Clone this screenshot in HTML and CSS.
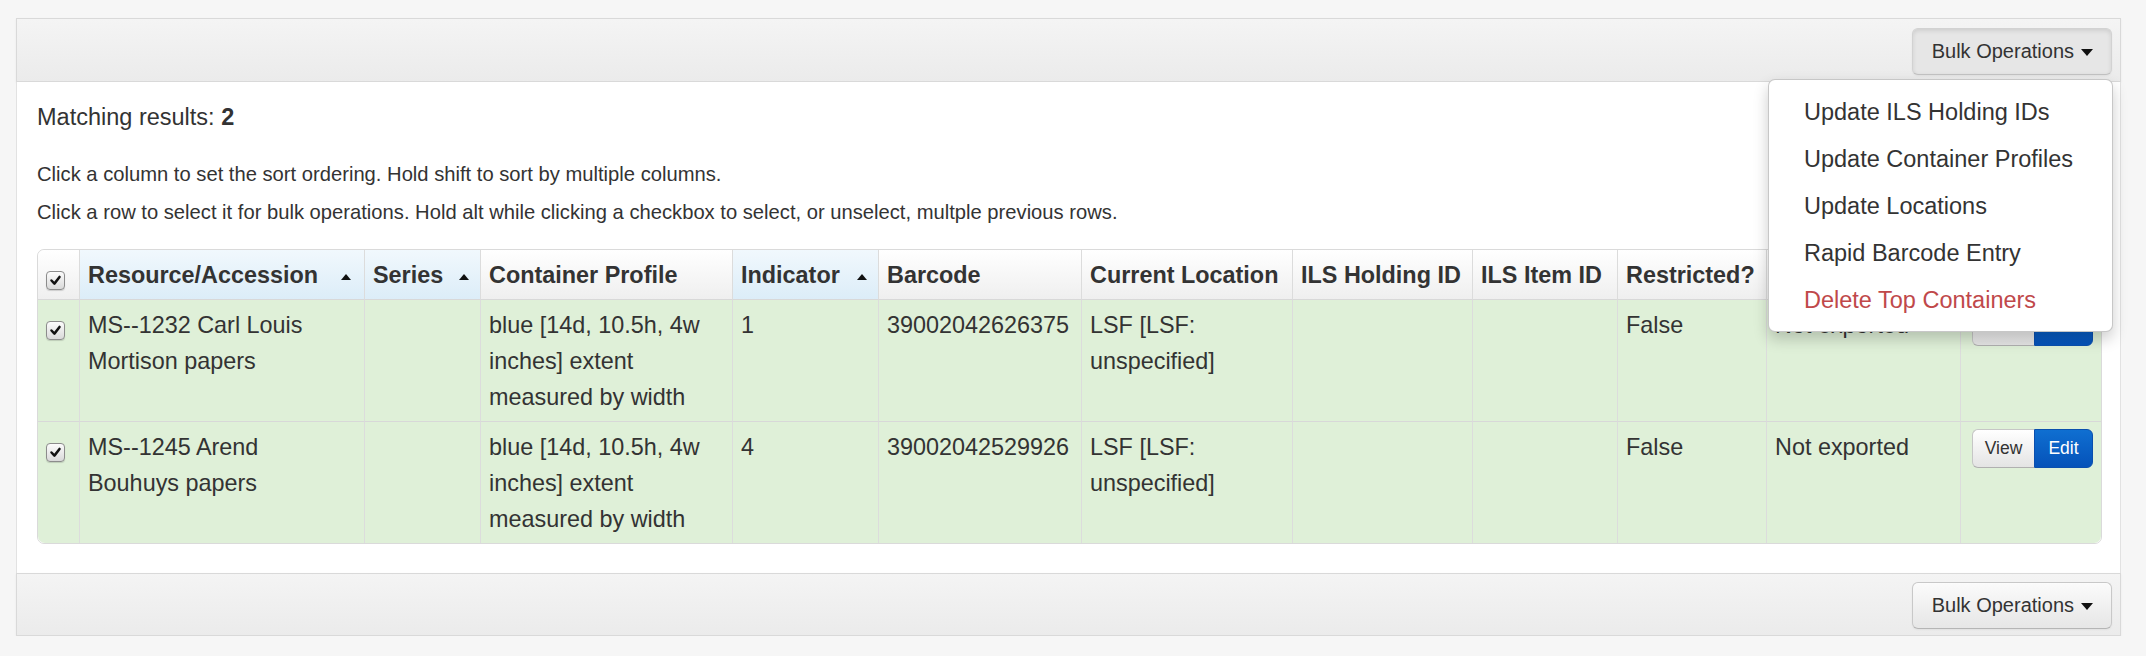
FILE: index.html
```html
<!DOCTYPE html>
<html>
<head>
<meta charset="utf-8">
<title>Top Containers</title>
<link rel="stylesheet" href="styles.css">
</head>
<body>
<div class="page">
  <div class="toolbar toolbar-top">
    <div class="btn-group">
      <button class="btn btn-bulk pressed">Bulk Operations <span class="caret"></span></button>
      <ul class="dropdown-menu">
        <li>Update ILS Holding IDs</li>
        <li>Update Container Profiles</li>
        <li>Update Locations</li>
        <li>Rapid Barcode Entry</li>
        <li class="danger">Delete Top Containers</li>
      </ul>
    </div>
  </div>

  <div class="panel-body">
    <div class="matching">Matching results: <strong>2</strong></div>
    <p class="help first">Click a column to set the sort ordering. Hold shift to sort by multiple columns.</p>
    <p class="help">Click a row to select it for bulk operations. Hold alt while clicking a checkbox to select, or unselect, multple previous rows.</p>

    <table class="results">
      <thead>
        <tr>
          <th class="c-check"><span class="checkbox"><svg viewBox="0 0 19 19"><path d="M5 9.5 L8.3 13 L14 5.5"/></svg></span></th>
          <th class="c-res sorted"><div class="th-in"><span>Resource/Accession</span><i class="sort-up"></i></div></th>
          <th class="c-series sorted"><div class="th-in"><span>Series</span><i class="sort-up"></i></div></th>
          <th class="c-prof">Container Profile</th>
          <th class="c-ind sorted"><div class="th-in"><span>Indicator</span><i class="sort-up"></i></div></th>
          <th class="c-bar">Barcode</th>
          <th class="c-loc">Current Location</th>
          <th class="c-hold">ILS Holding ID</th>
          <th class="c-item">ILS Item ID</th>
          <th class="c-restr">Restricted?</th>
          <th class="c-exp">Exported to ILS?</th>
          <th class="c-act"></th>
        </tr>
      </thead>
      <tbody>
        <tr>
          <td class="c-check"><span class="checkbox"><svg viewBox="0 0 19 19"><path d="M5 9.5 L8.3 13 L14 5.5"/></svg></span></td>
          <td class="c-res">MS--1232 Carl Louis Mortison papers</td>
          <td></td>
          <td>blue [14d, 10.5h, 4w inches] extent measured by width</td>
          <td>1</td>
          <td>39002042626375</td>
          <td>LSF [LSF: unspecified]</td>
          <td></td>
          <td></td>
          <td>False</td>
          <td>Not exported</td>
          <td class="c-act"><div class="btn-pair"><span class="btn-sm btn-view">View</span><span class="btn-sm btn-edit">Edit</span></div></td>
        </tr>
        <tr>
          <td class="c-check"><span class="checkbox"><svg viewBox="0 0 19 19"><path d="M5 9.5 L8.3 13 L14 5.5"/></svg></span></td>
          <td class="c-res">MS--1245 Arend Bouhuys papers</td>
          <td></td>
          <td>blue [14d, 10.5h, 4w inches] extent measured by width</td>
          <td>4</td>
          <td>39002042529926</td>
          <td>LSF [LSF: unspecified]</td>
          <td></td>
          <td></td>
          <td>False</td>
          <td>Not exported</td>
          <td class="c-act"><div class="btn-pair"><span class="btn-sm btn-view">View</span><span class="btn-sm btn-edit">Edit</span></div></td>
        </tr>
      </tbody>
    </table>
  </div>

  <div class="toolbar toolbar-bottom">
    <div class="btn-group">
      <button class="btn btn-bulk">Bulk Operations <span class="caret"></span></button>
    </div>
  </div>
</div>
</body>
</html>
```

FILE: styles.css
```css
* { box-sizing: border-box; }

html, body {
  margin: 0;
  background: #f6f6f6;
}

body {
  padding: 18px 25px 0 16px;
  font-family: "Liberation Sans", Arial, Helvetica, sans-serif;
  color: #333;
}

.page {
  width: 2105px;
}

/* toolbars */
.toolbar {
  display: flex;
  justify-content: flex-end;
  background: linear-gradient(#f4f4f4, #ebebeb);
  border: 1px solid #d9d9d9;
  padding: 9px 8px 6px 0;
  box-shadow: 0 1px 2px rgba(0,0,0,0.06);
}

.toolbar-bottom {
  padding: 8px 8px 6px 0;
}

.btn-group {
  position: relative;
}

.btn {
  font-family: "Liberation Sans", Arial, Helvetica, sans-serif;
  font-size: 20px;
  color: #333;
  height: 47px;
  padding: 0 18px 0 19px;
  border: 1px solid #c8c8c8;
  border-bottom-color: #b5b5b5;
  border-radius: 6px;
  background: linear-gradient(#fbfbfb, #e6e6e6);
  box-shadow: inset 0 1px 0 rgba(255,255,255,0.3), 0 1px 2px rgba(0,0,0,0.05);
  display: flex;
  align-items: center;
  gap: 7px;
}

.btn.pressed {
  background: #e6e6e6;
  border-color: #d2d2d2;
  border-bottom-color: #c2c2c2;
  box-shadow: inset 0 2px 4px rgba(0,0,0,0.1), 0 1px 2px rgba(0,0,0,0.05);
}

.caret {
  display: inline-block;
  width: 0;
  height: 0;
  border-top: 7px solid #111;
  border-left: 6px solid transparent;
  border-right: 6px solid transparent;
  margin-top: 1px;
}

/* dropdown */
.dropdown-menu {
  position: absolute;
  top: 51px;
  right: -1px;
  width: 345px;
  margin: 0;
  padding: 9px 0 7px;
  list-style: none;
  background: #fff;
  border: 1px solid rgba(0,0,0,0.22);
  border-radius: 7px;
  box-shadow: 0 7px 15px rgba(0,0,0,0.2);
  z-index: 10;
}

.dropdown-menu li {
  font-size: 23.5px;
  line-height: 47px;
  padding: 0 20px 0 35px;
  white-space: nowrap;
  color: #333;
}

.dropdown-menu li.danger {
  color: #c0484a;
}

/* panel */
.panel-body {
  background: #fff;
  border-left: 1px solid #e2e2e2;
  border-right: 1px solid #e2e2e2;
  padding: 20px 20px 29px 20px;
}

.matching {
  font-size: 23.5px;
  line-height: 30px;
}

.help {
  font-size: 20.2px;
  line-height: 28px;
  margin: 10px 0 0;
}

.help.first {
  margin-top: 28px;
}

/* table */
.results {
  margin-top: 23px;
  width: 2064px;
  table-layout: fixed;
  border-collapse: separate;
  border-spacing: 0;
  border: 1px solid #dadada;
  border-radius: 7px;
  font-size: 23.4px;
  line-height: 36px;
}

.results th,
.results td {
  padding: 7px 8px 6px 8px;
  text-align: left;
  vertical-align: top;
  border-left: 1px solid #dcdcdc;
}

.results th:first-child,
.results td:first-child {
  border-left: none;
}

.results td {
  border-top: 1px solid #d8d8d8;
  background: #dff0d8;
}

.results th {
  font-weight: bold;
  white-space: nowrap;
  background: linear-gradient(#ffffff, #efefef);
}

.results th.sorted {
  background: linear-gradient(#f1f8fd, #dcedf8);
}

.results th:first-child { border-top-left-radius: 7px; }
.results th:last-child { border-top-right-radius: 7px; }
.results tbody tr:last-child td:first-child { border-bottom-left-radius: 7px; }
.results tbody tr:last-child td:last-child { border-bottom-right-radius: 7px; }

.results .c-check { width: 41px; padding: 7px 0 6px 8px; }
.results .c-res { width: 285px; padding-right: 10px; }
.results .c-series { width: 116px; }
.results .c-prof { width: 252px; }
.results .c-ind { width: 146px; }
.results .c-bar { width: 203px; }
.results .c-loc { width: 211px; }
.results .c-hold { width: 180px; }
.results .c-item { width: 145px; }
.results .c-restr { width: 149px; }
.results .c-exp { width: 194px; }
.results .c-act { width: 141px; padding-right: 8px; }

.th-in {
  display: flex;
  align-items: center;
}

.sort-up {
  margin-left: auto;
  margin-right: 3px;
  margin-top: 3px;
  width: 0;
  height: 0;
  border-bottom: 6px solid #111;
  border-left: 5px solid transparent;
  border-right: 5px solid transparent;
}

/* checkbox */
.checkbox {
  display: block;
  width: 19px;
  height: 19px;
  margin-top: 14px;
  border: 1px solid #8c8c8c;
  border-radius: 4px;
  background: linear-gradient(#fcfcfc, #d9d9d9);
  box-shadow: 0 1px 1px rgba(0,0,0,0.15);
}

.checkbox svg {
  display: block;
  width: 17px;
  height: 17px;
}

.checkbox path {
  fill: none;
  stroke: #111;
  stroke-width: 2.8;
  stroke-linecap: round;
  stroke-linejoin: round;
}

/* small buttons */
.btn-pair {
  display: flex;
  justify-content: flex-end;
}

.btn-sm {
  display: block;
  height: 39px;
  line-height: 37px;
  font-size: 17.5px;
  text-align: center;
}

.btn-view {
  width: 62px;
  color: #333;
  border: 1px solid #c6c6c6;
  border-bottom-color: #b0b0b0;
  border-right: none;
  border-radius: 6px 0 0 6px;
  background: linear-gradient(#ffffff, #e4e4e4);
}

.btn-edit {
  width: 59px;
  color: #fff;
  border: 1px solid #0a4fae;
  border-radius: 0 6px 6px 0;
  background: linear-gradient(#0f6fd1, #0552b9);
}
```
